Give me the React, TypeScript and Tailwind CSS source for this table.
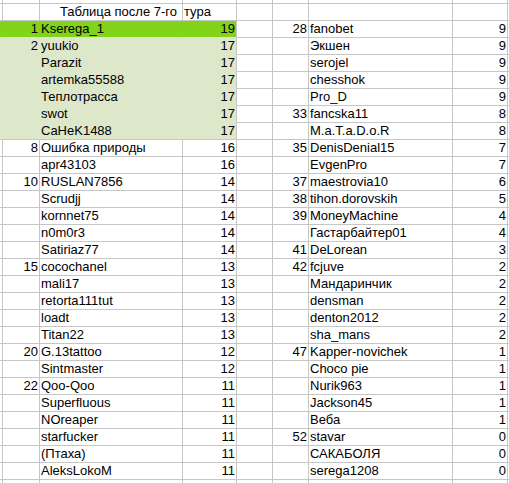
import React from "react";

const left: [string, string, string][] = [
  ["1", "Kserega_1", "19"],
  ["2", "yuukio", "17"],
  ["", "Parazit", "17"],
  ["", "artemka55588", "17"],
  ["", "Теплотрасса", "17"],
  ["", "swot", "17"],
  ["", "CaHeK1488", "17"],
  ["8", "Ошибка природы", "16"],
  ["", "apr43103", "16"],
  ["10", "RUSLAN7856", "14"],
  ["", "Scrudjj", "14"],
  ["", "kornnet75", "14"],
  ["", "n0m0r3", "14"],
  ["", "Satiriaz77", "14"],
  ["15", "cocochanel", "13"],
  ["", "mali17", "13"],
  ["", "retorta111tut", "13"],
  ["", "loadt", "13"],
  ["", "Titan22", "13"],
  ["20", "G.13tattoo", "12"],
  ["", "Sintmaster", "12"],
  ["22", "Qoo-Qoo", "11"],
  ["", "Superfluous", "11"],
  ["", "NOreaper", "11"],
  ["", "starfucker", "11"],
  ["", "(Птаха)", "11"],
  ["", "AleksLokoM", "11"],
];

const right: [string, string, string][] = [
  ["28", "fanobet", "9"],
  ["", "Экшен", "9"],
  ["", "serojel", "9"],
  ["", "chesshok", "9"],
  ["", "Pro_D", "9"],
  ["33", "fancska11", "8"],
  ["", "M.a.T.a.D.o.R", "8"],
  ["35", "DenisDenial15", "7"],
  ["", "EvgenPro", "7"],
  ["37", "maestrovia10", "6"],
  ["38", "tihon.dorovskih", "5"],
  ["39", "MoneyMachine", "4"],
  ["", "Гастарбайтер01", "4"],
  ["41", "DeLorean", "3"],
  ["42", "fcjuve", "2"],
  ["", "Мандаринчик", "2"],
  ["", "densman", "2"],
  ["", "denton2012", "2"],
  ["", "sha_mans", "2"],
  ["47", "Kapper-novichek", "1"],
  ["", "Choco pie", "1"],
  ["", "Nurik963", "1"],
  ["", "Jackson45", "1"],
  ["", "Веба", "1"],
  ["52", "stavar", "0"],
  ["", "САКАБОЛЯ", "0"],
  ["", "serega1208", "0"],
];

const W = [
  "w-[3px]",
  "w-[37px]",
  "w-[143px]",
  "w-[54px]",
  "w-[36px]",
  "w-[36px]",
  "w-[144px]",
  "w-[55px]",
  "flex-1",
];

type Fill = "none" | "bright" | "light";

function Cell({
  col,
  children,
  align = "left",
  fill = "none",
  borderR = "gray",
  borderB = "gray",
  extra = "",
}: {
  col: number;
  children?: React.ReactNode;
  align?: "left" | "right";
  fill?: Fill;
  borderR?: "gray" | "bright" | "light";
  borderB?: "gray" | "bright" | "light";
  extra?: string;
}) {
  const bg =
    fill === "bright" ? "bg-[#81d41a]" : fill === "light" ? "bg-[#dde8cb]" : "bg-white";
  const br =
    borderR === "bright"
      ? "border-r-[#81d41a]"
      : borderR === "light"
      ? "border-r-[#dde8cb]"
      : "border-r-[#c6c6c6]";
  const bb =
    borderB === "bright"
      ? "border-b-[#81d41a]"
      : borderB === "light"
      ? "border-b-[#dde8cb]"
      : "border-b-[#c6c6c6]";
  const al = align === "right" ? "justify-end pr-[1px]" : "justify-start pl-[1px]";
  return (
    <div
      className={`${W[col]} h-full shrink-0 box-border border-r border-b ${br} ${bb} ${bg} flex items-center ${al} whitespace-nowrap overflow-visible ${extra}`}
    >
      {children}
    </div>
  );
}

function Row({ i }: { i: number }) {
  const l = left[i];
  const r = right[i];
  const green = i < 7;
  const fill: Fill = i === 0 ? "bright" : green ? "light" : "none";
  const innerR = green ? (i === 0 ? "bright" : "light") : "gray";
  const innerB = green && i < 6 ? (i === 0 ? "light" : "light") : "gray";
  return (
    <div className="flex h-[17px]">
      <Cell col={0} fill={fill} borderR={innerR} borderB={innerB} />
      <Cell col={1} fill={fill} borderR={innerR} borderB={innerB} align="right">
        {l[0]}
      </Cell>
      <Cell col={2} fill={fill} borderR={innerR} borderB={innerB}>
        {l[1]}
      </Cell>
      <Cell col={3} fill={fill} borderR="gray" borderB={innerB} align="right">
        {l[2]}
      </Cell>
      <Cell col={4} />
      <Cell col={5} align="right">
        {r[0]}
      </Cell>
      <Cell col={6}>{r[1]}</Cell>
      <Cell col={7} align="right">
        {r[2]}
      </Cell>
      <Cell col={8} />
    </div>
  );
}

export default function App() {
  return (
    <div
      className="w-[509px] h-[483px] overflow-hidden bg-white text-[13px] leading-[16px] text-black"
      style={{ fontFamily: '"Liberation Sans", Arial, sans-serif' }}
    >
      <div className="flex h-[4px]">
        {W.map((_, c) => (
          <Cell key={c} col={c} />
        ))}
      </div>
      <div className="flex h-[17px]">
        <Cell col={0} />
        <Cell col={1} />
        <Cell col={2} align="right" extra="!pr-[5px]">
          Таблица после 7-го
        </Cell>
        <Cell col={3}>тура</Cell>
        <Cell col={4} />
        <Cell col={5} />
        <Cell col={6} />
        <Cell col={7} />
        <Cell col={8} />
      </div>
      {left.map((_, i) => (
        <Row key={i} i={i} />
      ))}
      <div className="flex h-[17px]">
        {W.map((_, c) => (
          <Cell key={c} col={c} />
        ))}
      </div>
    </div>
  );
}
